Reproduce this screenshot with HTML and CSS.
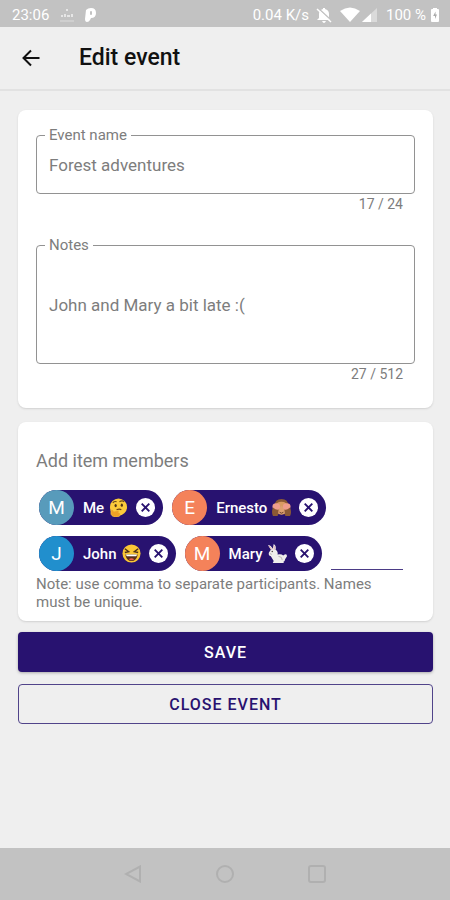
FILE: index.html
```html
<!DOCTYPE html>
<html lang="en">
<head>
<meta charset="utf-8">
<meta name="viewport" content="width=device-width, initial-scale=1">
<title>Edit event</title>
<link rel="stylesheet" href="styles.css">
</head>
<body>
<svg class="defs" aria-hidden="true">
  <symbol id="remove" viewBox="0 0 20 20">
    <circle cx="10" cy="10" r="10" fill="#fff"/>
    <path d="M6 6l8 8M14 6l-8 8" stroke="#281270" stroke-width="2" fill="none"/>
  </symbol>
</svg>
<div class="status">
  <span>23:06</span>
  <svg class="app-icon" viewBox="0 0 14 16" aria-hidden="true"><path d="M6 2h2v2H6zM1 8h2v2H1zM4 7h2v3H4zM7 8h3v2H7zM11 7h2v3h-2z" fill="#e6e6e6"/><path d="M0 14h14" stroke="#dcdcdc" stroke-width="1"/></svg>
  <svg class="p-icon" viewBox="0 0 12 14" aria-hidden="true"><path d="M1 2Q3 0 6 0Q11 0 11 5Q11 10 6 10L5 12Q4 14 2 14Q0 14 0 11Z" fill="#fff"/><path d="M6 4v2" stroke="#c2c2c2" stroke-width="2" stroke-linecap="round"/></svg>
  <span class="speed">0.04 K/s</span>
  <svg class="bell" viewBox="0 0 16 16" aria-hidden="true"><path d="M1 13l2-2V7q0-4 4-5V1h2v1q4 1 4 5v4l2 2zM6 14h4q-1 2-2 2t-2-2" fill="#fff"/><path d="M2 1l14 13" stroke="#c2c2c2" stroke-width="1.500"/><path d="M1 2l14 13" stroke="#fff" stroke-width="1.500"/></svg>
  <svg class="wifi" viewBox="0 0 20 15" aria-hidden="true"><path d="M0 4Q10-3 20 4L10 15Z" fill="#fff"/></svg>
  <svg class="signal" viewBox="0 0 15 14" aria-hidden="true"><path d="M0 14L15 0V14Z" fill="#dadada"/><path d="M0 14L9 5.600V14Z" fill="#fff"/></svg>
  <span class="percent">100 %</span>
  <svg class="battery" viewBox="0 0 8 14" aria-hidden="true"><path d="M2 0h4v1h1q1 0 1 1v11q0 1-1 1H1q-1 0-1-1V2q0-1 1-1h1z" fill="#fff"/><path d="M4.500 3.500L2.200 8H4v3l2-4.500H4.500z" fill="#aaa"/></svg>
</div>
<header class="appbar">
  <button class="back" type="button" aria-label="Back">
    <svg viewBox="0 0 18 18" aria-hidden="true"><path d="M17.500 9H2M9 1.500L1.500 9L9 16.500" fill="none" stroke="#111" stroke-width="2"/></svg>
  </button>
  <h1>Edit event</h1>
</header>
<main>
  <section class="card details">
    <fieldset class="field">
      <legend><label for="name">Event name</label></legend>
      <input id="name" type="text" maxlength="24" value="Forest adventures">
    </fieldset>
    <p class="counter">17 / 24</p>
    <fieldset class="field notes">
      <legend><label for="notes">Notes</label></legend>
      <textarea id="notes" rows="1" maxlength="512">John and Mary a bit late :(</textarea>
    </fieldset>
    <p class="counter">27 / 512</p>
  </section>
  <section class="card members">
    <h2><label for="member">Add item members</label></h2>
    <div class="chips">
      <span class="chip"><span class="avatar teal">M</span><span>Me</span>
        <svg class="emoji" viewBox="0 0 20 20" role="img" aria-label="thinking"><circle cx="10" cy="9.500" r="9" fill="#fccb3b"/><path d="M4 5q2-2 4-1M11 4q3-2 5 0" stroke="#6d4a17" stroke-width="1.200" fill="none"/><ellipse cx="7" cy="8" rx="1.200" ry="1.700" fill="#513519"/><ellipse cx="13.500" cy="7.500" rx="1.200" ry="1.700" fill="#513519"/><path d="M8 12.500q3-1.500 5 0" stroke="#674117" stroke-width="1.200" fill="none"/><path d="M2 12q2-1 3 2l5-1q2 0 0 2l2 1q1 3-3 4-5 1-7-3z" fill="#eea126" stroke="#ffd85c" stroke-width=".5"/></svg>
        <button class="remove" type="button" aria-label="Remove Me"><svg><use href="#remove"/></svg></button></span>
      <span class="chip"><span class="avatar orange">E</span><span>Ernesto</span>
        <svg class="emoji" viewBox="0 0 20 20" role="img" aria-label="see-no-evil monkey"><path d="M3 10Q2 1 10 1t7 9l-1 7H4z" fill="#8c5a35"/><path d="M4 9q0-5 6-5t6 5z" fill="#d99b62"/><ellipse cx="10" cy="13" rx="5" ry="4.500" fill="#dda070"/><ellipse cx="4.500" cy="9" rx="4" ry="3.500" fill="#ef9d8c"/><ellipse cx="15.500" cy="9" rx="4" ry="3.500" fill="#ef9d8c"/><path d="M1 10q3 3 6 2l-1 7H1q-2-4 0-9zM19 10q-3 3-6 2l1 7h5q2-4 0-9z" fill="#8c5a35"/><path d="M8 15q2 2 4 0" stroke="#653c28" fill="none"/></svg>
        <button class="remove" type="button" aria-label="Remove Ernesto"><svg><use href="#remove"/></svg></button></span>
      <span class="chip"><span class="avatar blue">J</span><span>John</span>
        <svg class="emoji" viewBox="0 0 20 20" role="img" aria-label="laughing"><circle cx="10" cy="10" r="9.500" fill="#fac735"/><path d="M3 5l4 3-4 1M17 5l-4 3 4 1" stroke="#4b301b" stroke-width="1.500" fill="none"/><path d="M3.500 11h13q-1 7-6.500 7t-6.500-7z" fill="#58321b"/><path d="M4 11h12l-1 2H5z" fill="#fff"/><path d="M7 16q3-2 6 0-3 2-6 0" fill="#ed5b4d"/></svg>
        <button class="remove" type="button" aria-label="Remove John"><svg><use href="#remove"/></svg></button></span>
      <span class="chip"><span class="avatar orange">M</span><span>Mary</span>
        <svg class="emoji" viewBox="0 0 20 20" role="img" aria-label="rabbit"><path d="M3 6L0 1q3 0 5 4L6 0q3 2 2 6 3 2 2 5 4-1 6 1 4-3 4 1l-2 3q0 2-2 3l1 1H5l1-2-3-5Q0 12 1 9z" fill="#efeeec"/><path d="M1 2l3 4M6.500 2v4" stroke="#dfa6aa" stroke-width="1"/><circle cx="4.500" cy="8" r=".8" fill="#524442"/><path d="M11 13q4 0 4 4M2 10l2 1" stroke="#b9b4b3" fill="none"/></svg>
        <button class="remove" type="button" aria-label="Remove Mary"><svg><use href="#remove"/></svg></button></span>
      <input id="member" class="member" type="text">
    </div>
    <p class="hint">Note: use comma to separate participants. Names must be unique.</p>
  </section>
  <button class="btn save" type="button">SAVE</button>
  <button class="btn close" type="button">CLOSE EVENT</button>
</main>
<nav class="navbar" aria-label="System">
  <button type="button" aria-label="Back"><svg viewBox="0 0 18 18"><path d="M16 1.500v15L2 9z"/></svg></button>
  <button type="button" aria-label="Home"><svg viewBox="0 0 18 18"><circle cx="9" cy="9" r="8"/></svg></button>
  <button type="button" aria-label="Recents"><svg viewBox="0 0 18 18"><rect x="1" y="1" width="16" height="16" rx="2"/></svg></button>
</nav>
</body>
</html>
```
FILE: styles.css
```css
* { box-sizing: border-box; }
body {
  margin: 0;
  min-height: 100vh;
  display: flex;
  flex-direction: column;
  background: #efefef;
  color: #7d7d7d;
  font-family: Roboto, "Liberation Sans", sans-serif;
}
h1, h2, p { margin: 0; font-weight: 400; }
button, input, textarea { font: inherit; color: inherit; }
button { border: 0; padding: 0; background: none; cursor: pointer; }
svg { display: block; }
.defs { position: absolute; width: 0; height: 0; }

.status {
  display: flex;
  align-items: center;
  height: 27px;
  padding: 2px 11px 0 12px;
  background: #c2c2c2;
  color: #fff;
  font-size: 15px;
  line-height: 20px;
}
.app-icon { width: 14px; height: 16px; margin-left: 11px; }
.p-icon { width: 12px; height: 14px; margin-left: 11px; }
.speed { margin-left: auto; }
.bell { width: 16px; height: 16px; margin-left: 7px; }
.wifi { width: 20px; height: 15px; margin-left: 8px; }
.signal { width: 15px; height: 14px; margin-left: 2px; }
.percent { margin-left: 9px; }
.battery { width: 8px; height: 14px; margin-left: 5px; }

.appbar {
  display: flex;
  align-items: center;
  gap: 39px;
  height: 64px;
  padding: 0 22px;
  border-bottom: 2px solid #e2e2e2;
}
.back svg { width: 18px; height: 18px; }
.appbar h1 { color: #111; font-size: 23px; line-height: 28px; font-weight: 500; }

main {
  flex: 1;
  display: flex;
  flex-direction: column;
  padding: 19px 17px 24px 18px;
}
.card {
  background: #fff;
  border-radius: 8px;
  box-shadow: 0 1px 2px #d0d0d0;
}
.details { padding: 17px 18px 26px; }
.field {
  min-width: 0;
  margin: 0;
  padding: 0 12px;
  border: 1px solid #929292;
  border-radius: 4px;
}
.field legend {
  margin-left: -4px;
  padding: 0 4px;
  font-size: 15px;
  line-height: 16px;
}
.field input, .field textarea {
  display: block;
  width: 100%;
  padding: 0;
  border: 0;
  outline: 0;
  background: none;
  resize: none;
  overflow: hidden;
  font-size: 17px;
  line-height: 24px;
}
.field input { height: 50px; padding-bottom: 6px; }
.field textarea { height: 110px; padding-top: 40px; }
.counter {
  padding: 2px 12px 0 0;
  text-align: right;
  font-size: 14px;
  line-height: 16px;
}
.notes { margin-top: 25px; }

.members { margin-top: 14px; padding: 27px 18px 10px; }
.members h2 { font-size: 18px; line-height: 24px; }
.chips {
  display: flex;
  flex-wrap: wrap;
  gap: 11px 9px;
  margin: 17px 12px 0 3px;
}
.chip {
  display: flex;
  align-items: center;
  height: 35px;
  padding-right: 8px;
  border-radius: 18px;
  background: #281270;
  color: #fff;
  font-size: 15px;
  font-weight: 500;
}
.avatar {
  width: 35px;
  height: 35px;
  margin-right: 9px;
  border-radius: 50%;
  text-align: center;
  font-size: 19px;
  font-weight: 400;
  line-height: 35px;
}
.teal { background: #589bbb; }
.orange { background: #f4825a; }
.blue { background: #218fcd; }
.emoji { width: 19px; height: 19px; margin-left: 5px; }
.remove { margin-left: 8px; }
.remove svg { width: 19px; height: 19px; }
.member {
  flex: 1;
  min-width: 60px;
  height: 34px;
  padding: 0;
  border: 0;
  border-bottom: 1px solid #4b3b86;
  outline: 0;
  background: none;
}
.hint { margin-top: 4px; padding-right: 24px; font-size: 15px; line-height: 18px; }

.btn {
  height: 40px;
  border-radius: 4px;
  font-size: 16px;
  font-weight: 500;
  letter-spacing: 1px;
}
.save { margin-top: 11px; background: #281270; color: #fff; box-shadow: 0 1px 3px #aaa; }
.close { margin-top: 12px; border: 1px solid #51448a; color: #281270; }

.navbar {
  display: flex;
  justify-content: center;
  align-items: center;
  gap: 74px;
  height: 52px;
  background: #c2c2c2;
}
.navbar svg { width: 18px; height: 18px; fill: none; stroke: #b0b0b0; stroke-width: 2; }
```
